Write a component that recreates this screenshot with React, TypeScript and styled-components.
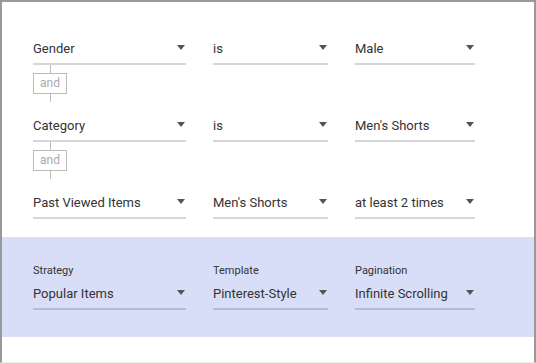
import styled, { createGlobalStyle } from 'styled-components'

const GlobalStyle = createGlobalStyle`
  html, body {
    margin: 0;
    padding: 0;
    background: #fff;
  }
  body {
    font-family: Roboto, "Liberation Sans", Arial, sans-serif;
    color: #333;
  }
`;

const Frame = styled.div`
  width: 536px;
  height: 363px;
  box-sizing: border-box;
  border: 2px solid #999;
  border-bottom: 1px solid #eee;
  background: #fff;
  display: flex;
  flex-direction: column;
`;

const Rules = styled.div`
  padding: 35px 0 0 31px;
  display: flex;
  flex-direction: column;
`;

const Grid = styled.div`
  display: grid;
  grid-template-columns: 153px 115px 120px;
  column-gap: 27px;
`;

const Field = styled.div<{ $tone?: 'light' | 'panel' }>`
  position: relative;
  height: 22px;
  line-height: 23px;
  padding-bottom: 4px;
  border-bottom: 2px solid ${p => (p.$tone === 'panel' ? '#b9bccb' : '#d6d6d6')};
  font-size: 13px;
  color: #333;
  white-space: nowrap;
`;

const Arrow = styled.span`
  position: absolute;
  right: 1px;
  top: 8px;
  width: 0;
  height: 0;
  border-left: 4px solid transparent;
  border-right: 4px solid transparent;
  border-top: 5px solid #555;
`;

const Connector = styled.div<{ $after: number }>`
  width: 34px;
  display: flex;
  flex-direction: column;
  align-items: center;
  margin-bottom: ${p => p.$after}px;
`;

const Stem = styled.div`
  width: 1px;
  height: 8px;
  background: #bbb;
`;

const AndBox = styled.div`
  box-sizing: border-box;
  width: 34px;
  height: 21px;
  border: 1px solid #bbb;
  font-size: 12px;
  line-height: 19px;
  text-align: center;
  color: #aaa;
`;

const Panel = styled.div`
  margin-top: 18px;
  background: #d9def8;
  padding: 27px 0 27px 31px;
`;

const Label = styled.div`
  font-size: 11px;
  line-height: 14px;
  margin-bottom: 4px;
  color: #333;
`;

type Sel = { value: string; tone?: 'light' | 'panel' };

function Select({ value, tone }: Sel) {
  return (
    <Field $tone={tone}>
      {value}
      <Arrow />
    </Field>
  );
}

const rows = [
  ['Gender', 'is', 'Male'],
  ['Category', 'is', "Men's Shorts"],
  ['Past Viewed Items', "Men's Shorts", 'at least 2 times'],
];

const settings = [
  ['Strategy', 'Popular Items'],
  ['Template', 'Pinterest-Style'],
  ['Pagination', 'Infinite Scrolling'],
];

export default function App() {
  return (
    <>
      <GlobalStyle />
      <Frame>
        <Rules>
          {rows.map((r, i) => (
            <div key={i}>
              <Grid>
                {r.map(v => (
                  <Select key={v} value={v} />
                ))}
              </Grid>
              {i < rows.length - 1 && (
                <Connector $after={12}>
                  <Stem />
                  <AndBox>and</AndBox>
                  <Stem />
                </Connector>
              )}
            </div>
          ))}
        </Rules>
        <Panel>
          <Grid>
            {settings.map(([label, value]) => (
              <div key={label}>
                <Label>{label}</Label>
                <Select value={value} tone="panel" />
              </div>
            ))}
          </Grid>
        </Panel>
      </Frame>
    </>
  );
}
